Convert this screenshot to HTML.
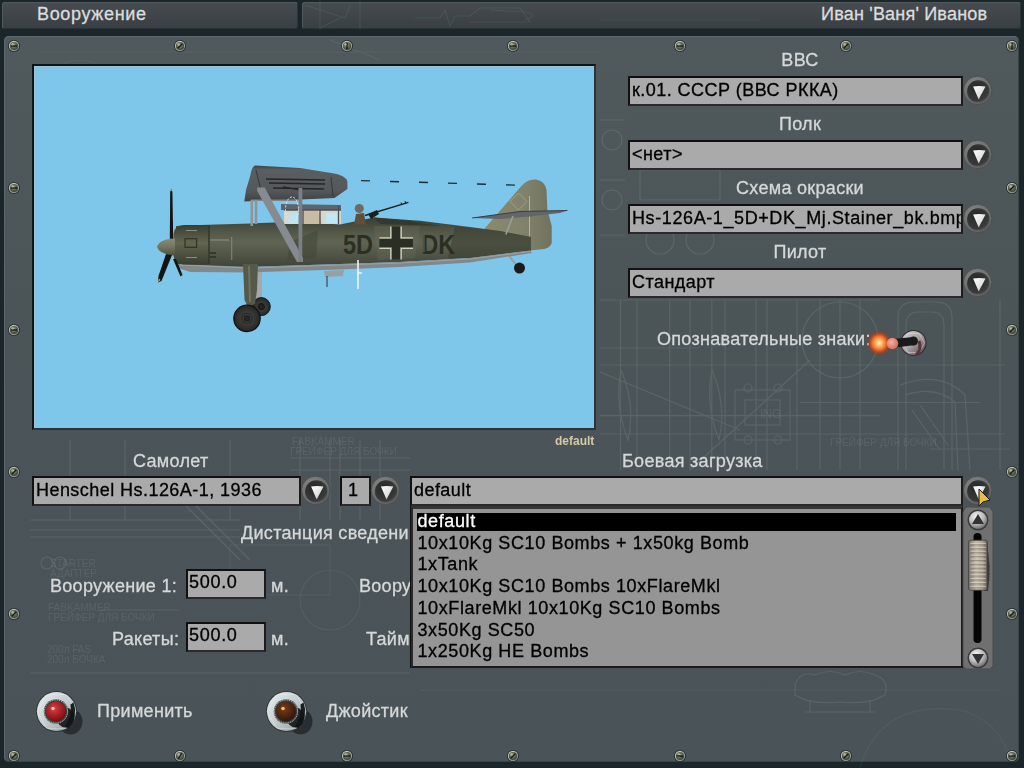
<!DOCTYPE html>
<html><head><meta charset="utf-8">
<style>
*{margin:0;padding:0;box-sizing:border-box}
html,body{width:1024px;height:768px;overflow:hidden;background:#1b262b;font-family:"Liberation Sans",sans-serif}
.abs{position:absolute}
#tb1,#tb2{position:absolute;top:2px;height:27px;background:linear-gradient(#464c50,#383e42);border-radius:3px;box-shadow:inset 1px 1px 0 #52595d, inset -1px -1px 0 #2c3236}
#tb1{left:2px;width:296px}
#tb2{left:302px;width:719px}
.ttl{position:absolute;color:#dcdcdc;font-size:18px;top:4px;white-space:nowrap;letter-spacing:0.2px;-webkit-text-stroke:0.3px #dcdcdc}
#main{position:absolute;left:4px;top:36px;width:1015px;height:726px;background:linear-gradient(#505a5d,#4b5558 40%,#4a5458);border-radius:5px;box-shadow:inset 1px 1px 0 #5d676b, inset -1px -1px 0 #3c4447}
.lbl{position:absolute;color:#d6d8d8;font-size:18px;white-space:nowrap;letter-spacing:0.3px;-webkit-text-stroke:0.3px #d6d8d8;margin-top:0.5px}
.fld{position:absolute;background:#aaaaaa;border:2px solid #111;border-right-color:#1c1c1c;border-bottom-color:#2a2a2a;color:#000;font-size:18px;letter-spacing:0.45px;white-space:nowrap;overflow:hidden;padding-left:2px;line-height:24px;-webkit-text-stroke:0.3px #000}
svg.ov{position:absolute;left:0;top:0}
.li{position:absolute;left:417.5px;font-size:18px;letter-spacing:0.6px;color:#000;white-space:nowrap;-webkit-text-stroke:0.3px currentColor}
</style></head>
<body>
<div id="tb1"></div><div id="tb2"></div>
<div class="ttl" style="left:37px;letter-spacing:0.65px">Вооружение</div>
<div class="ttl" style="left:821px">Иван 'Ваня' Иванов</div>
<div id="main"></div>
<svg class="ov" width="1024" height="768" viewBox="0 0 1024 768">
<defs>
<radialGradient id="gScrew" cx="0.45" cy="0.4" r="0.6">
<stop offset="0" stop-color="#a7ad98"/><stop offset="0.5" stop-color="#636a56"/><stop offset="1" stop-color="#3b4032"/></radialGradient>
<radialGradient id="gScrewRim" cx="0.4" cy="0.35" r="0.7"><stop offset="0" stop-color="#e4e8e0"/><stop offset="0.7" stop-color="#a8ada2"/><stop offset="1" stop-color="#70756c"/></radialGradient>
<g id="screw"><circle r="6" fill="#20292c"/><circle r="5.2" fill="url(#gScrewRim)"/><circle r="4.1" fill="url(#gScrew)"/><path d="M-2.8 2.4 L2.8 -2.4" stroke="#161a12" stroke-width="1.4"/><circle cx="-1.5" cy="-1.8" r="1.2" fill="#c8cdb8" opacity="0.6"/></g>
</defs>
<g fill="none" stroke="#b4c4c4" stroke-width="1.2" opacity="0.15">
<path d="M600 365 L1005 365 M600 415.6 L880 415.6 M600 434 L1005 434 M600 348 L700 348 M800 402.5 L980 402.5 M930 449 L1010 449 M600 300 L880 300"/>
<path d="M620.5 300 L620.5 470"/>
<path d="M637 300 L637 470"/>
<path d="M669.7 300 L669.7 470"/>
<path d="M690 300 L690 470"/>
<path d="M711.8 300 L711.8 470"/>
<path d="M725 300 L725 470"/>
<path d="M756 300 L756 470"/>
<path d="M767 300 L767 470"/>
<path d="M797 300 L797 470"/>
<path d="M820 300 L820 470"/>
<path d="M840 300 L840 470"/>
<path d="M860 300 L860 470"/>
<path d="M1000 300 L1000 470"/>
<path d="M898 470 L898 318 Q898 302 914 302 L936 302 Q952 302 952 318 L952 470"/>
<path d="M906 470 L906 326 Q906 312 918 312 L932 312 Q944 312 944 326 L944 470"/>
<path d="M900 385 Q940 370 965 395 L970 470 M905 395 Q935 385 955 402 L958 470"/>
<path d="M912 410 L940 450 M920 405 L948 445"/>
<path d="M621 370 Q636 405 628 440 Q614 405 621 370 Z M712 370 Q727 405 719 440 Q705 405 712 370 Z"/>
<rect x="735" y="390" width="55" height="50"/><rect x="745" y="400" width="35" height="25"/>
<circle cx="748" cy="388" r="4"/><circle cx="778" cy="388" r="4"/><circle cx="748" cy="440" r="4"/><circle cx="778" cy="440" r="4"/>
<path d="M600 372 L740 430 M690 470 L810 360"/>
<circle cx="840" cy="340" r="38"/>
<path d="M600 120 L625 120 M600 235 L625 235 M600 180 L625 180" />
<circle cx="612" cy="140" r="10"/><circle cx="612" cy="200" r="10"/><circle cx="660" cy="240" r="14"/><circle cx="700" cy="240" r="14"/>
<path d="M640 170 L720 170 L720 200 L640 200 Z"/>
<path d="M30 673 L410 673 M30 520 L240 520 M30 530 L240 530 M30 537 L240 537 M100 610 L180 610"/>
<path d="M70 440 L70 520"/>
<path d="M125 440 L125 520"/>
<path d="M230 440 L230 520"/>
<path d="M300 440 L300 520"/>
<path d="M330 440 L330 520"/>
<path d="M380 440 L380 520"/>
<path d="M180 500 L240 560 M190 500 L250 560"/>
<rect x="230" y="545" width="100" height="50" opacity="0.6"/>
<circle cx="47" cy="563" r="6"/><circle cx="60" cy="563" r="6"/>
<path d="M290 458 L410 458 M290 470 L410 470 M340 440 L340 520 M360 440 L360 520"/>
<circle cx="330" cy="600" r="30" opacity="0.6"/>
<path d="M860 768 Q880 700 960 710 Q1000 720 1010 760" opacity="0.5"/>
<path d="M420 690 L1000 690" opacity="0.6"/>
<path d="M795 685 Q800 670 815 675 Q830 668 845 675 Q860 668 875 675 Q890 680 885 695 Q870 705 840 702 Q810 705 795 695 Z M810 700 L810 712 M870 700 L870 712 M805 712 L875 712"/>
<circle cx="80" cy="100" r="40" opacity="0.5"/>
<path d="M40 52 L600 52 M330 40 L380 60" opacity="0.6"/>
<path d="M305 5 L345 18 L350 6 M340 18 L320 28 M415 18 L440 18 L445 10 L450 26 L455 16 L470 16 L480 8 L520 8 L530 22 L470 22 M490 10 L525 12 Q540 15 525 20 M600 20 L760 20 M320 30 L320 0 M360 0 L360 29" opacity="0.7"/>
</g>
<g fill="#b4c4c4" opacity="0.13" font-family="Liberation Sans" font-size="10">
<text x="48" y="611">FABKAMMER</text><text x="48" y="621">ГРЕЙФЕР ДЛЯ БОЧКИ</text>
<text x="47" y="653">200л FAS</text><text x="47" y="663">200л БОЧКА</text>
<text x="50" y="567">STARTER</text><text x="50" y="577">АДАПТЕР</text>
<text x="292" y="445">FABKAMMER</text><text x="290" y="455">ГРЕЙФЕР ДЛЯ БОЧКИ</text>
<text x="830" y="446">ГРЕЙФЕР ДЛЯ БОЧКИ</text>
<text x="760" y="418" font-size="12">ING</text>
</g>
<g transform="translate(14,46)"><circle r="6" fill="#20292c"/><circle r="5.2" fill="url(#gScrewRim)"/><circle r="4.1" fill="url(#gScrew)"/><path d="M-3.2 0 L3.2 0" stroke="#161a12" stroke-width="1.4" transform="rotate(0)"/><circle cx="-1.5" cy="-1.8" r="1.2" fill="#c8cdb8" opacity="0.6"/></g>
<g transform="translate(180,46)"><circle r="6" fill="#20292c"/><circle r="5.2" fill="url(#gScrewRim)"/><circle r="4.1" fill="url(#gScrew)"/><path d="M-3.2 0 L3.2 0" stroke="#161a12" stroke-width="1.4" transform="rotate(-45)"/><circle cx="-1.5" cy="-1.8" r="1.2" fill="#c8cdb8" opacity="0.6"/></g>
<g transform="translate(347,46)"><circle r="6" fill="#20292c"/><circle r="5.2" fill="url(#gScrewRim)"/><circle r="4.1" fill="url(#gScrew)"/><path d="M-3.2 0 L3.2 0" stroke="#161a12" stroke-width="1.4" transform="rotate(90)"/><circle cx="-1.5" cy="-1.8" r="1.2" fill="#c8cdb8" opacity="0.6"/></g>
<g transform="translate(513,46)"><circle r="6" fill="#20292c"/><circle r="5.2" fill="url(#gScrewRim)"/><circle r="4.1" fill="url(#gScrew)"/><path d="M-3.2 0 L3.2 0" stroke="#161a12" stroke-width="1.4" transform="rotate(0)"/><circle cx="-1.5" cy="-1.8" r="1.2" fill="#c8cdb8" opacity="0.6"/></g>
<g transform="translate(680,46)"><circle r="6" fill="#20292c"/><circle r="5.2" fill="url(#gScrewRim)"/><circle r="4.1" fill="url(#gScrew)"/><path d="M-3.2 0 L3.2 0" stroke="#161a12" stroke-width="1.4" transform="rotate(0)"/><circle cx="-1.5" cy="-1.8" r="1.2" fill="#c8cdb8" opacity="0.6"/></g>
<g transform="translate(846,46)"><circle r="6" fill="#20292c"/><circle r="5.2" fill="url(#gScrewRim)"/><circle r="4.1" fill="url(#gScrew)"/><path d="M-3.2 0 L3.2 0" stroke="#161a12" stroke-width="1.4" transform="rotate(-45)"/><circle cx="-1.5" cy="-1.8" r="1.2" fill="#c8cdb8" opacity="0.6"/></g>
<g transform="translate(1012,46)"><circle r="6" fill="#20292c"/><circle r="5.2" fill="url(#gScrewRim)"/><circle r="4.1" fill="url(#gScrew)"/><path d="M-3.2 0 L3.2 0" stroke="#161a12" stroke-width="1.4" transform="rotate(90)"/><circle cx="-1.5" cy="-1.8" r="1.2" fill="#c8cdb8" opacity="0.6"/></g>
<g transform="translate(14,756)"><circle r="6" fill="#20292c"/><circle r="5.2" fill="url(#gScrewRim)"/><circle r="4.1" fill="url(#gScrew)"/><path d="M-3.2 0 L3.2 0" stroke="#161a12" stroke-width="1.4" transform="rotate(-45)"/><circle cx="-1.5" cy="-1.8" r="1.2" fill="#c8cdb8" opacity="0.6"/></g>
<g transform="translate(180,756)"><circle r="6" fill="#20292c"/><circle r="5.2" fill="url(#gScrewRim)"/><circle r="4.1" fill="url(#gScrew)"/><path d="M-3.2 0 L3.2 0" stroke="#161a12" stroke-width="1.4" transform="rotate(-60)"/><circle cx="-1.5" cy="-1.8" r="1.2" fill="#c8cdb8" opacity="0.6"/></g>
<g transform="translate(347,756)"><circle r="6" fill="#20292c"/><circle r="5.2" fill="url(#gScrewRim)"/><circle r="4.1" fill="url(#gScrew)"/><path d="M-3.2 0 L3.2 0" stroke="#161a12" stroke-width="1.4" transform="rotate(0)"/><circle cx="-1.5" cy="-1.8" r="1.2" fill="#c8cdb8" opacity="0.6"/></g>
<g transform="translate(513,756)"><circle r="6" fill="#20292c"/><circle r="5.2" fill="url(#gScrewRim)"/><circle r="4.1" fill="url(#gScrew)"/><path d="M-3.2 0 L3.2 0" stroke="#161a12" stroke-width="1.4" transform="rotate(-45)"/><circle cx="-1.5" cy="-1.8" r="1.2" fill="#c8cdb8" opacity="0.6"/></g>
<g transform="translate(680,756)"><circle r="6" fill="#20292c"/><circle r="5.2" fill="url(#gScrewRim)"/><circle r="4.1" fill="url(#gScrew)"/><path d="M-3.2 0 L3.2 0" stroke="#161a12" stroke-width="1.4" transform="rotate(10)"/><circle cx="-1.5" cy="-1.8" r="1.2" fill="#c8cdb8" opacity="0.6"/></g>
<g transform="translate(846,756)"><circle r="6" fill="#20292c"/><circle r="5.2" fill="url(#gScrewRim)"/><circle r="4.1" fill="url(#gScrew)"/><path d="M-3.2 0 L3.2 0" stroke="#161a12" stroke-width="1.4" transform="rotate(-45)"/><circle cx="-1.5" cy="-1.8" r="1.2" fill="#c8cdb8" opacity="0.6"/></g>
<g transform="translate(1012,756)"><circle r="6" fill="#20292c"/><circle r="5.2" fill="url(#gScrewRim)"/><circle r="4.1" fill="url(#gScrew)"/><path d="M-3.2 0 L3.2 0" stroke="#161a12" stroke-width="1.4" transform="rotate(0)"/><circle cx="-1.5" cy="-1.8" r="1.2" fill="#c8cdb8" opacity="0.6"/></g>
<g transform="translate(14,188)"><circle r="6" fill="#20292c"/><circle r="5.2" fill="url(#gScrewRim)"/><circle r="4.1" fill="url(#gScrew)"/><path d="M-3.2 0 L3.2 0" stroke="#161a12" stroke-width="1.4" transform="rotate(0)"/><circle cx="-1.5" cy="-1.8" r="1.2" fill="#c8cdb8" opacity="0.6"/></g>
<g transform="translate(14,330)"><circle r="6" fill="#20292c"/><circle r="5.2" fill="url(#gScrewRim)"/><circle r="4.1" fill="url(#gScrew)"/><path d="M-3.2 0 L3.2 0" stroke="#161a12" stroke-width="1.4" transform="rotate(0)"/><circle cx="-1.5" cy="-1.8" r="1.2" fill="#c8cdb8" opacity="0.6"/></g>
<g transform="translate(14,472)"><circle r="6" fill="#20292c"/><circle r="5.2" fill="url(#gScrewRim)"/><circle r="4.1" fill="url(#gScrew)"/><path d="M-3.2 0 L3.2 0" stroke="#161a12" stroke-width="1.4" transform="rotate(-45)"/><circle cx="-1.5" cy="-1.8" r="1.2" fill="#c8cdb8" opacity="0.6"/></g>
<g transform="translate(14,614)"><circle r="6" fill="#20292c"/><circle r="5.2" fill="url(#gScrewRim)"/><circle r="4.1" fill="url(#gScrew)"/><path d="M-3.2 0 L3.2 0" stroke="#161a12" stroke-width="1.4" transform="rotate(-45)"/><circle cx="-1.5" cy="-1.8" r="1.2" fill="#c8cdb8" opacity="0.6"/></g>
<g transform="translate(1012,188)"><circle r="6" fill="#20292c"/><circle r="5.2" fill="url(#gScrewRim)"/><circle r="4.1" fill="url(#gScrew)"/><path d="M-3.2 0 L3.2 0" stroke="#161a12" stroke-width="1.4" transform="rotate(-45)"/><circle cx="-1.5" cy="-1.8" r="1.2" fill="#c8cdb8" opacity="0.6"/></g>
<g transform="translate(1012,330)"><circle r="6" fill="#20292c"/><circle r="5.2" fill="url(#gScrewRim)"/><circle r="4.1" fill="url(#gScrew)"/><path d="M-3.2 0 L3.2 0" stroke="#161a12" stroke-width="1.4" transform="rotate(-45)"/><circle cx="-1.5" cy="-1.8" r="1.2" fill="#c8cdb8" opacity="0.6"/></g>
<g transform="translate(1012,472)"><circle r="6" fill="#20292c"/><circle r="5.2" fill="url(#gScrewRim)"/><circle r="4.1" fill="url(#gScrew)"/><path d="M-3.2 0 L3.2 0" stroke="#161a12" stroke-width="1.4" transform="rotate(-45)"/><circle cx="-1.5" cy="-1.8" r="1.2" fill="#c8cdb8" opacity="0.6"/></g>
<g transform="translate(1012,614)"><circle r="6" fill="#20292c"/><circle r="5.2" fill="url(#gScrewRim)"/><circle r="4.1" fill="url(#gScrew)"/><path d="M-3.2 0 L3.2 0" stroke="#161a12" stroke-width="1.4" transform="rotate(-45)"/><circle cx="-1.5" cy="-1.8" r="1.2" fill="#c8cdb8" opacity="0.6"/></g>
</svg>
<div class="abs" style="left:32px;top:64px;width:564px;height:366px;background:#7fc7ea;border-top:2px solid #0f1416;border-left:2px solid #0f1416;border-right:2px solid #2e3336;border-bottom:2px solid #2e3336;box-shadow:inset 1px 1px 0 #9cc2d6"></div>
<svg class="ov" width="1024" height="768"><defs>
<linearGradient id="gFus" x1="0" y1="0" x2="0" y2="1">
<stop offset="0" stop-color="#3a3e33"/><stop offset="0.3" stop-color="#545848"/><stop offset="0.5" stop-color="#606452"/><stop offset="0.8" stop-color="#4e5244"/><stop offset="1" stop-color="#404438"/></linearGradient>
<linearGradient id="gCowl" x1="0" y1="0" x2="0" y2="1">
<stop offset="0" stop-color="#3a3e32"/><stop offset="0.45" stop-color="#62654f"/><stop offset="1" stop-color="#3a3e32"/></linearGradient>
<linearGradient id="gSpin" x1="0" y1="0" x2="0" y2="1">
<stop offset="0" stop-color="#8a8c78"/><stop offset="0.5" stop-color="#737560"/><stop offset="1" stop-color="#4e503f"/></linearGradient>
<linearGradient id="gFin" x1="0" y1="0" x2="1" y2="0">
<stop offset="0" stop-color="#8a8a6e"/><stop offset="0.6" stop-color="#80826a"/><stop offset="1" stop-color="#70725e"/></linearGradient>
<linearGradient id="gWing" x1="0" y1="0" x2="0" y2="1">
<stop offset="0" stop-color="#3c4042"/><stop offset="0.12" stop-color="#5a5e60"/><stop offset="0.7" stop-color="#54585a"/><stop offset="1" stop-color="#3e4244"/></linearGradient>
<radialGradient id="gWheel" cx="0.5" cy="0.5" r="0.5"><stop offset="0" stop-color="#2a2a28"/><stop offset="0.35" stop-color="#1a1a18"/><stop offset="0.45" stop-color="#3a3a36"/><stop offset="1" stop-color="#262624"/></radialGradient>
</defs>
<path d="M361 180.6 L528 185.5" stroke="#1f2d33" stroke-width="1.4" stroke-dasharray="9 20"/>
<path d="M254 272 L262 272 L262 304 L255 304 Z" fill="#a3a8aa"/>
<circle cx="261.3" cy="306.6" r="9" fill="url(#gWheel)"/>
<circle cx="261.3" cy="306.6" r="9" fill="none" stroke="#151513" stroke-width="1"/>
<path d="M509 256 L519 268" stroke="#9aa0a2" stroke-width="2"/>
<circle cx="519.5" cy="268.1" r="5.5" fill="#1a1a18"/>
<path d="M484.4 228.7 L521.6 185.8 Q528 178.5 536 179.5 Q545 181 546.5 190 L547.4 210 L551.7 226 L551.7 243 Q550 248 544 249 L530.2 250.5 L500 252 Z" fill="url(#gFin)"/>
<path d="M529.5 196 L529.5 240" stroke="#c8ccc4" stroke-width="1" opacity="0.7"/>
<path d="M518.5 193 L527 201.5 L518.5 210 L510 201.5 Z" stroke="#c8c0a0" stroke-width="1" fill="none" opacity="0.45"/>
<path d="M176 226 L200 225 L250 223.5 L300 221.5 L340 224.5 L374 217.5 L420 220.7 L470 227 L500 231 L531 237 L531 250.5 L470 258 L400 262 L340 264 L250 267 L190 266 L176 264 Z" fill="url(#gFus)"/>
<path d="M290 242 L318 230 L316 258 L287 261 Z" fill="#44483a" opacity="0.6"/>
<path d="M374 226 L420 226 L415 258 L378 260 Z" fill="#6a6e5a" opacity="0.35"/>
<path d="M455 226 L500 231 L531 237 L531 250.5 L470 258 L448 258 Z" fill="#3a3e32" opacity="0.55"/>
<path d="M374 217.5 L410 221 L440 226 L380 224 Z" fill="#34382e"/>
<path d="M176 264 L250 267 L340 264 L400 262 L470 258 L530 250.5 L532 253 L470 262.5 L400 267 L340 269.5 L250 272.5 L190 272 L178 268 Z" fill="#80888c"/>
<path d="M180 265 L250 268 L340 265 L400 263 L470 259 L530 251.5" stroke="#9aa2a6" stroke-width="1.2" fill="none"/>
<path d="M173.6 234 Q174 225.5 184 225 L209.5 225 L209.5 264.5 L184 264.5 Q174 264 173.6 256 Z" fill="url(#gCowl)"/>
<rect x="185" y="238.7" width="11.6" height="8.6" fill="none" stroke="#2f3329" stroke-width="1.2"/>
<path d="M186 230.5 L197 230.5 M186 257.5 L197 257.5 M188 268.5 L197 268.5" stroke="#8a8e7c" stroke-width="1.2"/>
<path d="M209 226 L209 264" stroke="#33372c" stroke-width="1.5"/>
<path d="M210 253 L216 253 M210 257 L216 257" stroke="#2c3026" stroke-width="1.5"/>
<path d="M231.7 237 L231.7 260" stroke="#8a8e7a" stroke-width="1.2" opacity="0.8"/>
<path d="M210 240 L229 240" stroke="#c0c4b4" stroke-width="1" opacity="0.5"/>
<path d="M175 238.5 L172 238.7 Q159 239.5 156.9 246.6 Q159 254 172 255.2 L175 255.4 Z" fill="url(#gSpin)"/>
<path d="M170.2 192 L171.2 188.6 L172.4 192 L173.2 238.7 L169.8 238.7 Z" fill="#141414"/>
<path d="M170.5 191 L171.2 188.6 L172 191 Z" fill="#c8b040"/>
<path d="M166 254 L172 255 L161.5 281 L157.9 282.4 L158.5 276 Z" fill="#141414"/>
<path d="M157.9 282.4 L159 278.5 L160.5 280 Z" fill="#c8b040"/>
<path d="M173 259 L176 259 L182.5 275 L180.5 276.5 Z" fill="#141414"/>
<text x="343" y="253.7" font-family="Liberation Sans" font-size="27" font-weight="bold" fill="#2c3024" textLength="30" lengthAdjust="spacingAndGlyphs">5D</text>
<text x="421.5" y="253.7" font-family="Liberation Sans" font-size="27" font-weight="bold" fill="#2a2e24" textLength="33.5" lengthAdjust="spacingAndGlyphs">DK</text>
<path d="M424 235 L424 252" stroke="#a0a088" stroke-width="0.8" opacity="0.7"/>
<path d="M392 226.4 L400 226.4 L400 239 L413 239 L413 247 L400 247 L400 259.5 L392 259.5 L392 247 L379.4 247 L379.4 239 L392 239 Z" fill="#2a2e24"/>
<path d="M390.8 226.4 L390.8 237.9 L379.4 237.9 M401.2 226.4 L401.2 237.9 L413 237.9 M390.8 259.5 L390.8 248.3 L379.4 248.3 M401.2 259.5 L401.2 248.3 L413 248.3" stroke="#d0d0c0" stroke-width="1.3" fill="none"/>
<path d="M281 204 L341 205 L341 210 L281 210 Z" fill="#5e646c"/>
<path d="M284 210 L341 210 L341 224 L284 224 Z" fill="#d6d8ce"/>
<path d="M300 211 L318 211 L322 224 L300 224 Z" fill="#c8bca4"/>
<path d="M290 214 L300 214 L300 224 L288 224 Z" fill="#b8e4f4"/>
<path d="M326 213 L337 213 L337 223 L326 223 Z" fill="#c0e8f4"/>
<path d="M303 210 L303 224 M320 210 L320 224 M338.5 206 L338.5 224 M284 210 L341 210" stroke="#4a4e54" stroke-width="1.3"/>
<path d="M263 199.5 L298 199.5" stroke="#8a9094" stroke-width="1.5"/>
<path d="M354 224.5 L356 214 L364 213 L366 224.5 Z" fill="#5e4e3a"/>
<circle cx="359.3" cy="208.5" r="4.5" fill="#6e6a5c"/>
<path d="M365 215.5 L408.4 202.4" stroke="#1e1e1a" stroke-width="1.5"/>
<path d="M368 214 L377 210 L379 214 L371 219 Z" fill="#1e1e1a"/>
<path d="M405 201 L406 204 M401 202.5 L402 205" stroke="#1e1e1a" stroke-width="1"/>
<path d="M255 165.4 L300 168 L331.3 172.9 Q346 175 347.4 181.5 L347.4 189 L334.5 198 L290 200 L244.3 201.4 L246 190 L250.2 176 Q251.5 167 255 165.4 Z" fill="url(#gWing)"/>
<path d="M266 179 L325 180 M269 183 L325 184 M273 188 L324 189 M283 187 L301 190" stroke="#1a1e20" stroke-width="1.5" opacity="0.85"/>
<path d="M331 177 L333 196 M256 170 L262 195" stroke="#34383a" stroke-width="1"/>
<path d="M251 200.3 L298 200.3" stroke="#7e8488" stroke-width="1.5"/>
<path d="M250.5 200 L253 200 L253 226 L250.5 226 Z M254.8 200 L257.3 200 L257.3 224 L254.8 224 Z" fill="#8e9498"/>
<path d="M257.2 187.4 L264.7 187.4 L303 258 L303 262 L297 262 L257.2 191 Z" fill="#858b90"/>
<path d="M298.5 188 L302.3 188 L302.3 262 L298.5 262 Z" fill="#7a8085"/>
<ellipse cx="292" cy="209.5" rx="6.5" ry="12.5" fill="none" stroke="#e8ecec" stroke-width="1" stroke-dasharray="2 1.6"/>
<path d="M243 264 L258 264 L257 290 L255 304 L248 307 L244.5 300 Z" fill="#55594a"/>
<path d="M249 266 L250 302" stroke="#6e725e" stroke-width="2"/>
<circle cx="247" cy="318.4" r="13.2" fill="url(#gWheel)"/>
<circle cx="247" cy="318.4" r="13.2" fill="none" stroke="#121210" stroke-width="1.2"/>
<circle cx="247" cy="318.4" r="4" fill="none" stroke="#3e3e3a" stroke-width="1.5"/>
<path d="M324 271 L344 270 L343 276 L325 277 Z" fill="#9aa0a2"/>
<path d="M327 276 L327 287" stroke="#2a2e30" stroke-width="1"/>
<path d="M358 260 L358 289 M358 273 L362 273" stroke="#f0f4f4" stroke-width="1.6"/>
<path d="M472.2 218 L520 211.5 L567.4 210.5 L560 213 L530 216.5 L500 219 Z" fill="#62666a"/>
<path d="M472.2 218 L520 211.5 L567.4 210.5" stroke="#3a3e40" stroke-width="1" fill="none"/>
<path d="M513 216 L505.8 234.5" stroke="#9aa0a2" stroke-width="1.5"/></svg>
<div class="abs" style="left:555px;top:434px;color:#d6c8a6;font-size:12px;font-weight:bold">default</div>
<div class="lbl" style="left:700px;width:200px;text-align:center;top:49px">ВВС</div>
<div class="fld" style="left:628px;top:76px;width:335px;height:30px">к.01. СССР (ВВС РККА)</div>
<div class="lbl" style="left:700px;width:200px;text-align:center;top:113px">Полк</div>
<div class="fld" style="left:628px;top:140px;width:335px;height:30px">&lt;нет&gt;</div>
<div class="lbl" style="left:700px;width:200px;text-align:center;top:177px">Схема окраски</div>
<div class="fld" style="left:628px;top:204px;width:335px;height:30px;letter-spacing:0.6px">Hs-126A-1_5D+DK_Mj.Stainer_bk.bmp</div>
<div class="lbl" style="left:700px;width:200px;text-align:center;top:241px">Пилот</div>
<div class="fld" style="left:628px;top:268px;width:335px;height:30px">Стандарт</div>
<div class="lbl" style="left:657px;top:328px">Опознавательные знаки:</div>
<div class="lbl" style="left:133px;top:450px">Самолет</div>
<div class="lbl" style="left:622px;top:450px">Боевая загрузка</div>
<div class="fld" style="left:32px;top:476px;width:269px;height:30px">Henschel Hs.126A-1, 1936</div>
<div class="fld" style="left:340px;top:476px;width:31px;height:30px;padding-left:6px">1</div>
<div class="fld" style="left:410px;top:476px;width:553px;height:30px">default</div>
<div class="lbl" style="left:241px;top:522px">Дистанция сведени</div>
<div class="lbl" style="left:50px;top:575px">Вооружение 1:</div>
<div class="fld" style="left:186px;top:569px;width:80px;height:30px;line-height:22px;padding-left:1px;letter-spacing:0.7px">500.0</div>
<div class="lbl" style="left:271px;top:575px">м.</div>
<div class="lbl" style="left:359px;top:575px">Вооружение 2:</div>
<div class="lbl" style="left:112px;top:628px">Ракеты:</div>
<div class="fld" style="left:186px;top:622px;width:80px;height:30px;line-height:22px;padding-left:1px;letter-spacing:0.7px">500.0</div>
<div class="lbl" style="left:271px;top:628px">м.</div>
<div class="lbl" style="left:366px;top:628px">Таймер</div>
<div class="lbl" style="left:97px;top:700px">Применить</div>
<div class="lbl" style="left:326px;top:700px">Джойстик</div>
<div class="abs" style="left:411px;top:506px;width:552px;height:162px;background:#959595;border:2px solid #1a1a1a;border-top:3px solid #353535;border-left-color:#2a2a2a;box-shadow:-1px 0 0 #111"></div>
<div class="abs" style="left:417px;top:513px;width:539px;height:18px;background:#000"></div>
<div class="li" style="top:510.9px;color:#fff;line-height:20px">default</div>
<div class="li" style="top:532.6px;color:#000;line-height:20px">10x10Kg SC10 Bombs + 1x50kg Bomb</div>
<div class="li" style="top:554.4px;color:#000;line-height:20px">1xTank</div>
<div class="li" style="top:576.1px;color:#000;line-height:20px">10x10Kg SC10 Bombs 10xFlareMkl</div>
<div class="li" style="top:597.9px;color:#000;line-height:20px">10xFlareMkl 10x10Kg SC10 Bombs</div>
<div class="li" style="top:619.6px;color:#000;line-height:20px">3x50Kg SC50</div>
<div class="li" style="top:641.4px;color:#000;line-height:20px">1x250Kg HE Bombs</div>
<svg class="ov" width="1024" height="768" viewBox="0 0 1024 768">
<defs>
<radialGradient id="gDark" cx="0.4" cy="0.35" r="0.7"><stop offset="0" stop-color="#5a5a5a"/><stop offset="1" stop-color="#2e2e2e"/></radialGradient>
<linearGradient id="gTri" x1="0" y1="0" x2="1" y2="1"><stop offset="0" stop-color="#ffffff"/><stop offset="0.6" stop-color="#e0e0e0"/><stop offset="1" stop-color="#7a7a7a"/></linearGradient>
<radialGradient id="gRing" cx="0.4" cy="0.35" r="0.7"><stop offset="0" stop-color="#8a8c8a"/><stop offset="1" stop-color="#5e6060"/></radialGradient>
<radialGradient id="gInner" cx="0.4" cy="0.35" r="0.75"><stop offset="0" stop-color="#262626"/><stop offset="0.75" stop-color="#3a3a3a"/><stop offset="1" stop-color="#6a6a6a"/></radialGradient>
<g id="ddb"><circle r="14.3" fill="url(#gRing)"/><circle r="14.3" fill="none" stroke="#4a4e50" stroke-width="1"/><circle cx="0.6" cy="1" r="11.2" fill="url(#gInner)"/><path d="M-4.6 -3.8 Q1.3 -5 7.8 -3.8 L1 9 Z" fill="url(#gTri)"/></g>
<radialGradient id="gSilver" cx="0.4" cy="0.3" r="0.8"><stop offset="0" stop-color="#f4f4f4"/><stop offset="0.5" stop-color="#bdbdbd"/><stop offset="1" stop-color="#5a5a5a"/></radialGradient>
</defs>
<use href="#ddb" x="977.7" y="90.4"/>
<use href="#ddb" x="977.7" y="154.4"/>
<use href="#ddb" x="977.7" y="218.4"/>
<use href="#ddb" x="977.7" y="282.4"/>
<use href="#ddb" x="315.7" y="490.4"/>
<use href="#ddb" x="385.5" y="490.4"/>
<use href="#ddb" x="977.7" y="490.4"/>
<path d="M966 507 L990 507 L993 512 L993 666 L990 669 L966 669 L963 666 L963 512 Z" fill="#707070" stroke="#4a4a4a" stroke-width="1"/>
<rect x="973.5" y="533" width="8" height="110" rx="4" fill="#050505"/>
<circle cx="978" cy="520" r="10.5" fill="#3a3d3d"/><circle cx="978" cy="520" r="9" fill="url(#gSilver)"/>
<path d="M972 524 L984 524 L978 514 Z" fill="#333"/>
<circle cx="978" cy="658" r="10.5" fill="#3a3d3d"/><circle cx="978" cy="658" r="9" fill="url(#gSilver)"/>
<path d="M972 654 L984 654 L978 664 Z" fill="#333"/>
<linearGradient id="gThumb" x1="0" y1="0" x2="1" y2="0"><stop offset="0" stop-color="#7a7468"/><stop offset="0.4" stop-color="#c4bcae"/><stop offset="0.75" stop-color="#a8a092"/><stop offset="1" stop-color="#5e5850"/></linearGradient>
<path d="M986 541 Q992 565 988 591 L984 591 L984 541 Z" fill="#2a2c2c" opacity="0.8"/>
<rect x="968.6" y="540.2" width="18.8" height="50" rx="2" fill="url(#gThumb)"/>
<rect x="968.6" y="540.2" width="18.8" height="50" rx="2" fill="none" stroke="#3e3c38" stroke-width="0.8"/>
<line x1="970.5" y1="543.5" x2="986" y2="543.5" stroke="#e0dace" stroke-width="0.9" opacity="0.7"/>
<line x1="970.5" y1="544.9" x2="986" y2="544.9" stroke="#6a6458" stroke-width="0.7" opacity="0.6"/>
<line x1="970.5" y1="547.4" x2="986" y2="547.4" stroke="#e0dace" stroke-width="0.9" opacity="0.7"/>
<line x1="970.5" y1="548.8" x2="986" y2="548.8" stroke="#6a6458" stroke-width="0.7" opacity="0.6"/>
<line x1="970.5" y1="551.3" x2="986" y2="551.3" stroke="#e0dace" stroke-width="0.9" opacity="0.7"/>
<line x1="970.5" y1="552.7" x2="986" y2="552.7" stroke="#6a6458" stroke-width="0.7" opacity="0.6"/>
<line x1="970.5" y1="555.2" x2="986" y2="555.2" stroke="#e0dace" stroke-width="0.9" opacity="0.7"/>
<line x1="970.5" y1="556.6" x2="986" y2="556.6" stroke="#6a6458" stroke-width="0.7" opacity="0.6"/>
<line x1="970.5" y1="559.1" x2="986" y2="559.1" stroke="#e0dace" stroke-width="0.9" opacity="0.7"/>
<line x1="970.5" y1="560.5" x2="986" y2="560.5" stroke="#6a6458" stroke-width="0.7" opacity="0.6"/>
<line x1="970.5" y1="563.0" x2="986" y2="563.0" stroke="#e0dace" stroke-width="0.9" opacity="0.7"/>
<line x1="970.5" y1="564.4" x2="986" y2="564.4" stroke="#6a6458" stroke-width="0.7" opacity="0.6"/>
<line x1="970.5" y1="566.9" x2="986" y2="566.9" stroke="#e0dace" stroke-width="0.9" opacity="0.7"/>
<line x1="970.5" y1="568.3" x2="986" y2="568.3" stroke="#6a6458" stroke-width="0.7" opacity="0.6"/>
<line x1="970.5" y1="570.8" x2="986" y2="570.8" stroke="#e0dace" stroke-width="0.9" opacity="0.7"/>
<line x1="970.5" y1="572.2" x2="986" y2="572.2" stroke="#6a6458" stroke-width="0.7" opacity="0.6"/>
<line x1="970.5" y1="574.7" x2="986" y2="574.7" stroke="#e0dace" stroke-width="0.9" opacity="0.7"/>
<line x1="970.5" y1="576.1" x2="986" y2="576.1" stroke="#6a6458" stroke-width="0.7" opacity="0.6"/>
<line x1="970.5" y1="578.6" x2="986" y2="578.6" stroke="#e0dace" stroke-width="0.9" opacity="0.7"/>
<line x1="970.5" y1="580.0" x2="986" y2="580.0" stroke="#6a6458" stroke-width="0.7" opacity="0.6"/>
<line x1="970.5" y1="582.5" x2="986" y2="582.5" stroke="#e0dace" stroke-width="0.9" opacity="0.7"/>
<line x1="970.5" y1="583.9" x2="986" y2="583.9" stroke="#6a6458" stroke-width="0.7" opacity="0.6"/>
<line x1="970.5" y1="586.4" x2="986" y2="586.4" stroke="#e0dace" stroke-width="0.9" opacity="0.7"/>
<line x1="970.5" y1="587.8" x2="986" y2="587.8" stroke="#6a6458" stroke-width="0.7" opacity="0.6"/>
<defs><linearGradient id="pb56n" x1="0" y1="0" x2="1" y2="1"><stop offset="0" stop-color="#e8eeee"/><stop offset="0.5" stop-color="#c4cccf"/><stop offset="1" stop-color="#8a9498"/></linearGradient>
<radialGradient id="pb56d" cx="0.4" cy="0.35" r="0.7"><stop offset="0" stop-color="#d84040"/><stop offset="0.6" stop-color="#a01c20"/><stop offset="1" stop-color="#6a0e10"/></radialGradient></defs>
<ellipse cx="70.5" cy="721.5" rx="12" ry="13" fill="#1e2224" opacity="0.75"/>
<circle cx="56.5" cy="711.5" r="20.5" fill="#2e3538"/>
<circle cx="56.5" cy="711.5" r="19.5" fill="url(#pb56n)"/>
<path d="M76.0 711.5 L66.2 728.4 L46.8 728.4 L37.0 711.5 L46.7 694.6 L66.2 694.6 Z" fill="none" stroke="#f4f8f8" stroke-width="1" opacity="0.35"/>
<path d="M73.5 702.5 Q78.5 715.5 68.5 728.5 L64.5 726.5 Q72.5 715.5 70.5 704.5 Z" fill="#1a1e20"/>
<ellipse cx="65.5" cy="717.5" rx="9" ry="10" fill="#121416" opacity="0.9"/>
<circle cx="56.0" cy="711.5" r="12.2" fill="#3a3e40"/>
<circle cx="56.0" cy="711.5" r="11.6" fill="none" stroke="#e8e8e8" stroke-width="1" stroke-dasharray="1 1.2"/>
<circle cx="56.0" cy="711.5" r="10" fill="url(#pb56d)"/>
<circle cx="53.0" cy="708.5" r="1.8" fill="#ffd0d0" opacity="0.9"/>
<defs><linearGradient id="pb286n" x1="0" y1="0" x2="1" y2="1"><stop offset="0" stop-color="#e8eeee"/><stop offset="0.5" stop-color="#c4cccf"/><stop offset="1" stop-color="#8a9498"/></linearGradient>
<radialGradient id="pb286d" cx="0.4" cy="0.35" r="0.7"><stop offset="0" stop-color="#7a3c18"/><stop offset="0.6" stop-color="#4a2410"/><stop offset="1" stop-color="#2a1408"/></radialGradient></defs>
<ellipse cx="300.5" cy="721.5" rx="12" ry="13" fill="#1e2224" opacity="0.75"/>
<circle cx="286.5" cy="711.5" r="20.5" fill="#2e3538"/>
<circle cx="286.5" cy="711.5" r="19.5" fill="url(#pb286n)"/>
<path d="M306.0 711.5 L296.2 728.4 L276.8 728.4 L267.0 711.5 L276.8 694.6 L296.2 694.6 Z" fill="none" stroke="#f4f8f8" stroke-width="1" opacity="0.35"/>
<path d="M303.5 702.5 Q308.5 715.5 298.5 728.5 L294.5 726.5 Q302.5 715.5 300.5 704.5 Z" fill="#1a1e20"/>
<ellipse cx="295.5" cy="717.5" rx="9" ry="10" fill="#121416" opacity="0.9"/>
<circle cx="286.0" cy="711.5" r="12.2" fill="#3a3e40"/>
<circle cx="286.0" cy="711.5" r="11.6" fill="none" stroke="#e8e8e8" stroke-width="1" stroke-dasharray="1 1.2"/>
<circle cx="286.0" cy="711.5" r="10" fill="url(#pb286d)"/>
<circle cx="283.0" cy="708.5" r="1.8" fill="#ffd060" opacity="0.9"/>
<defs><radialGradient id="gGlow" cx="0.5" cy="0.5" r="0.5"><stop offset="0" stop-color="#fff4d0"/><stop offset="0.25" stop-color="#ffb860"/><stop offset="0.55" stop-color="#f06828"/><stop offset="0.75" stop-color="#c84018" stop-opacity="0.6"/><stop offset="1" stop-color="#a03010" stop-opacity="0"/></radialGradient>
<linearGradient id="gTogNut" x1="0" y1="0" x2="1" y2="1"><stop offset="0" stop-color="#d8d4d4"/><stop offset="0.5" stop-color="#a8a0a2"/><stop offset="1" stop-color="#4a4042"/></linearGradient>
<radialGradient id="gBall" cx="0.4" cy="0.4" r="0.6"><stop offset="0" stop-color="#f8b0a0"/><stop offset="1" stop-color="#d07060"/></radialGradient></defs>
<circle cx="913.5" cy="343" r="13" fill="#2a2e30"/>
<circle cx="913.5" cy="343" r="12" fill="url(#gTogNut)"/>
<path d="M924.5 343.0 L919.0 352.5 L908.0 352.5 L902.5 343.0 L908.0 333.5 L919.0 333.5 Z" fill="none" stroke="#e8e4e4" stroke-width="0.8" opacity="0.6"/>
<circle cx="913.5" cy="341" r="4.5" fill="#1a1a1a"/>
<path d="M919 341 Q922 350 916 355" stroke="#5a3438" stroke-width="3" fill="none"/>
<circle cx="879" cy="343" r="13" fill="url(#gGlow)"/>
<path d="M892 339 L914 337 L915 345 L892 348 Z" fill="#1a1a1a"/>
<circle cx="892.5" cy="343.5" r="5.8" fill="url(#gBall)"/>
<path d="M979 489 L979 506 L983 502 L990 500 Z" fill="#e8c040" stroke="#1a1a10" stroke-width="1"/>
</svg>
</body></html>
